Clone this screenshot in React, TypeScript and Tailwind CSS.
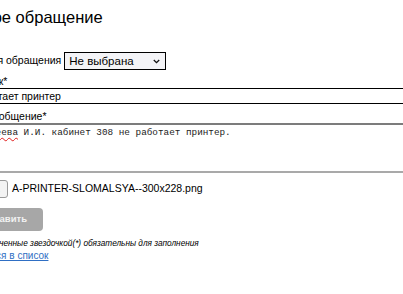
import React, { useState } from "react";

const App: React.FC = () => {
  const [category, setCategory] = useState("none");
  const [subject, setSubject] = useState("Не работает принтер");

  return (
    <div className="w-[403px] h-[294px] overflow-hidden bg-white text-black font-['Liberation_Sans',Arial,sans-serif]">
      {/* page is scrolled a bit to the right, so the left edge is cut off */}
      <div className="-ml-[46px] w-[540px]">
        <h1 className="pt-[5px] pl-[9px] text-[16.5px] leading-[24px] font-normal">Новое обращение</h1>

        <div className="mt-[23px] flex items-center h-[18px] text-[10.5px]">
          <label htmlFor="category">Категория обращения</label>
          <div className="relative ml-[3px]">
            <select
              id="category"
              value={category}
              onChange={(e) => setCategory(e.target.value)}
              className="appearance-none w-[102px] h-[18px] border border-black bg-[#f4f4f7] pl-[4px] text-[11.5px] leading-[16px] outline-none"
            >
              <option value="none">Не выбрана</option>
              <option value="hw">Оборудование</option>
              <option value="sw">Программы</option>
            </select>
            <svg
              className="absolute right-[6px] top-[7px] pointer-events-none"
              width="7"
              height="5"
              viewBox="0 0 7 5"
            >
              <path d="M0.8 1 L3.5 3.7 L6.2 1" fill="none" stroke="#111" strokeWidth="1.3" />
            </svg>
          </div>
        </div>

        <label htmlFor="subject" className="block mt-[5px] text-[10.5px] leading-[13px]">
          Заголовок*
        </label>
        <input
          id="subject"
          value={subject}
          onChange={(e) => setSubject(e.target.value)}
          className="block w-[520px] h-[16px] border border-black px-[3px] text-[10.5px] leading-[14px] outline-none"
        />

        <label className="block mt-[6px] text-[10.5px] leading-[13px]">Новое сообщение*</label>
        <div className="w-[520px] h-[50px] border-2 border-t-[#7c7c7c] border-l-[#7c7c7c] border-b-[#a9a9a9] border-r-[#a9a9a9] pl-[6px] pr-[3px] pt-[2px] font-['Liberation_Mono','Courier_New',monospace] text-[9.33px] leading-[12px] text-[#222]">
          <span className="underline decoration-wavy decoration-[#e02020] underline-offset-2">Пантелеева</span>{" "}
          И.И. кабинет 308 не работает принтер.
        </div>

        <div className="mt-[7px] flex items-center h-[18px] text-[10.5px]">
          <button className="h-[18px] w-[54px] rounded-[3px] border border-[#9a9a9a] bg-[#f3f3f3] text-[10.5px]">
            Обзор...
          </button>
          <span className="ml-[4px]">A-PRINTER-SLOMALSYA--300x228.png</span>
        </div>

        <button className="mt-[10px] block h-[23px] pl-[22px] pr-[16px] rounded-[4px] bg-[#a7a7a7] text-[9.5px] font-bold text-[#f2f2f2]">
          Отправить
        </button>

        <p className="mt-[7px] text-[8.25px] leading-[11px] italic">
          Поля, отмеченные звездочкой(*) обязательны для заполнения
        </p>
        <a href="#" className="block ml-[4px] mt-[1px] text-[10px] leading-[12px] text-[#2f6fc4] underline">
          Вернуться в список
        </a>
      </div>
    </div>
  );
};

export default App;
